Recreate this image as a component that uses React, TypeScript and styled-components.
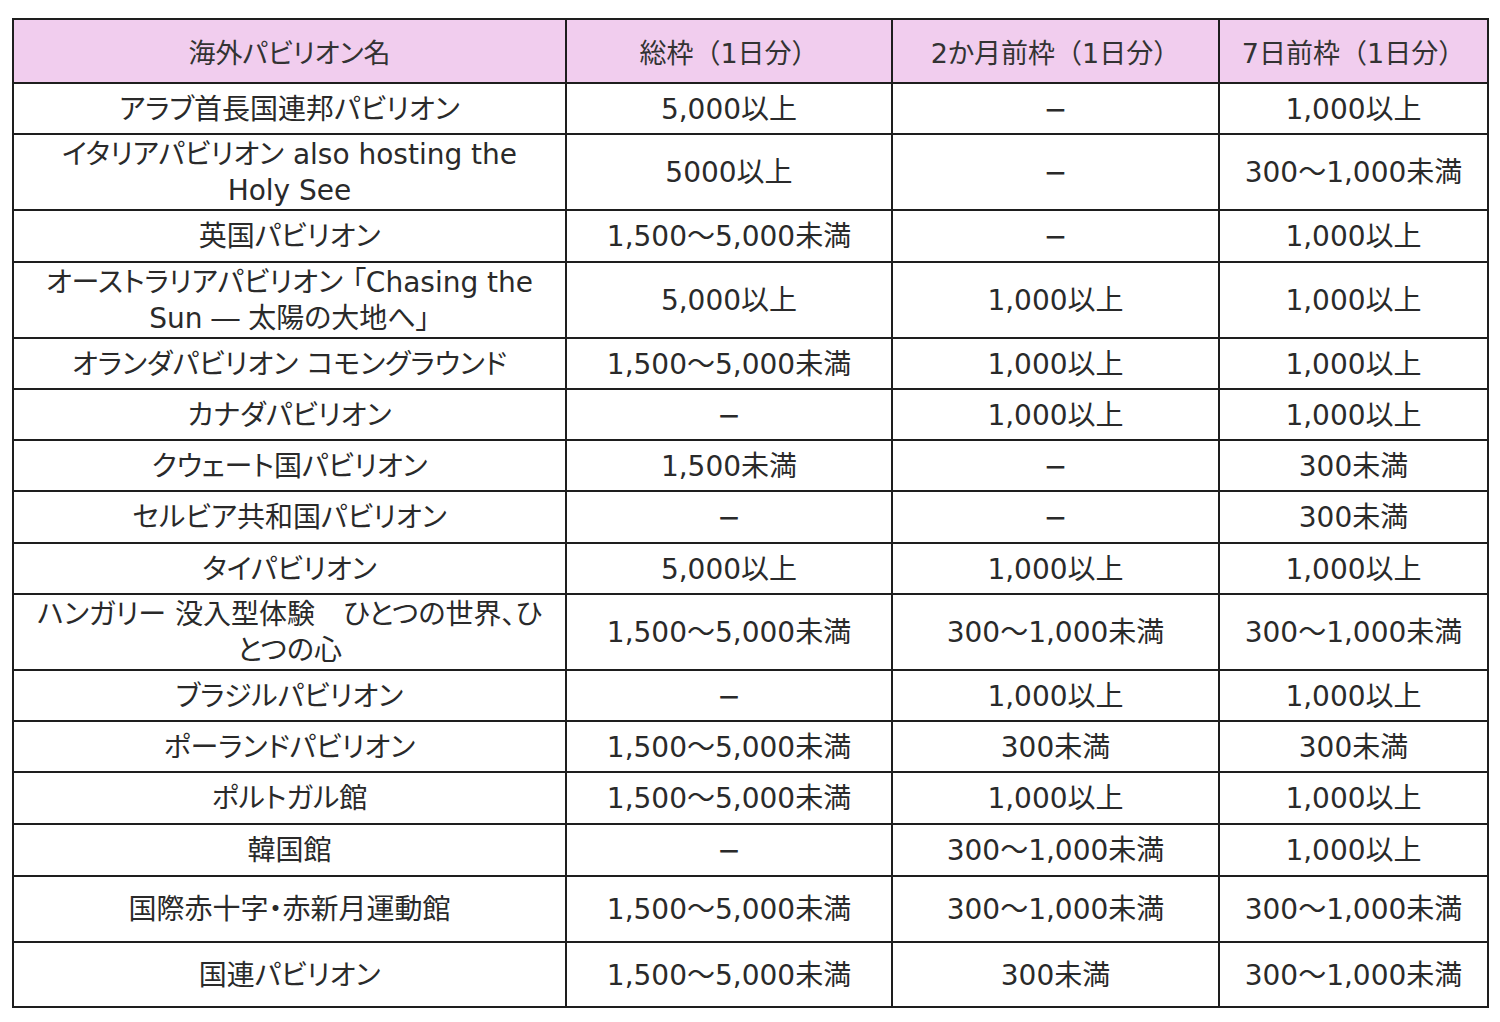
import React from 'react'
import styled, { createGlobalStyle } from 'styled-components'

const GlobalStyle = createGlobalStyle`
  html, body {
    margin: 0;
    padding: 0;
    background: #ffffff;
  }
  body {
    font-family: 'DejaVu Sans', 'Noto Sans CJK JP', sans-serif;
    font-feature-settings: 'palt';
    color: #2a2a2a;
  }
`

const Page = styled.div`
  width: 1500px;
  height: 1022px;
  padding: 18px 0 0 12px;
  box-sizing: border-box;
`

const Table = styled.table`
  width: 1475px;
  border-collapse: collapse;
  table-layout: fixed;
  border: 2.5px solid #1e1e1e;
`

const HeadCell = styled.th`
  background: #f1cdee;
  font-weight: 400;
  font-size: 27px;
  height: 62px;
  padding: 0 4px;
  text-align: center;
  border: 2px solid #1e1e1e;
  color: #333333;
`

const Paren = styled.span`
  font-feature-settings: normal;
`

const Row = styled.tr<{ $h: number }>`
  height: ${({ $h }) => $h}px;
`

const Cell = styled.td`
  border: 2px solid #1e1e1e;
  text-align: center;
  vertical-align: middle;
  font-size: 28px;
  line-height: 36px;
  padding: 2px 4px 0;
  color: #2a2a2a;
  white-space: nowrap;
`

type Item = { name: React.ReactNode; total: string; m2: string; d7: string; h: number }

const DASH = '−'

const rows: Item[] = [
  { name: 'アラブ首長国連邦パビリオン', total: '5,000以上', m2: DASH, d7: '1,000以上', h: 51 },
  { name: <>イタリアパビリオン also hosting the<br />Holy See</>, total: '5000以上', m2: DASH, d7: '300～1,000未満', h: 74 },
  { name: '英国パビリオン', total: '1,500～5,000未満', m2: DASH, d7: '1,000以上', h: 52 },
  { name: <>オーストラリアパビリオン 「Chasing the<br />Sun ― 太陽の大地へ」</>, total: '5,000以上', m2: '1,000以上', d7: '1,000以上', h: 75 },
  { name: 'オランダパビリオン コモングラウンド', total: '1,500～5,000未満', m2: '1,000以上', d7: '1,000以上', h: 51 },
  { name: 'カナダパビリオン', total: DASH, m2: '1,000以上', d7: '1,000以上', h: 51 },
  { name: 'クウェート国パビリオン', total: '1,500未満', m2: DASH, d7: '300未満', h: 51 },
  { name: 'セルビア共和国パビリオン', total: DASH, m2: DASH, d7: '300未満', h: 52 },
  { name: 'タイパビリオン', total: '5,000以上', m2: '1,000以上', d7: '1,000以上', h: 51 },
  { name: <>ハンガリー 没入型体験　ひとつの世界、ひ<br />とつの心</>, total: '1,500～5,000未満', m2: '300～1,000未満', d7: '300～1,000未満', h: 75 },
  { name: 'ブラジルパビリオン', total: DASH, m2: '1,000以上', d7: '1,000以上', h: 51 },
  { name: 'ポーランドパビリオン', total: '1,500～5,000未満', m2: '300未満', d7: '300未満', h: 51 },
  { name: 'ポルトガル館', total: '1,500～5,000未満', m2: '1,000以上', d7: '1,000以上', h: 52 },
  { name: '韓国館', total: DASH, m2: '300～1,000未満', d7: '1,000以上', h: 52 },
  { name: '国際赤十字・赤新月運動館', total: '1,500～5,000未満', m2: '300～1,000未満', d7: '300～1,000未満', h: 66 },
  { name: '国連パビリオン', total: '1,500～5,000未満', m2: '300未満', d7: '300～1,000未満', h: 65 },
]

const Head = ({ label }: { label: string }) => (
  <HeadCell>
    {label}
    <Paren>（</Paren>1日分<Paren>）</Paren>
  </HeadCell>
)

export default function App() {
  return (
    <Page>
      <GlobalStyle />
      <Table>
        <colgroup>
          <col style={{ width: 553 }} />
          <col style={{ width: 326 }} />
          <col style={{ width: 327 }} />
          <col style={{ width: 269 }} />
        </colgroup>
        <thead>
          <tr>
            <HeadCell>海外パビリオン名</HeadCell>
            <Head label="総枠" />
            <Head label="2か月前枠" />
            <Head label="7日前枠" />
          </tr>
        </thead>
        <tbody>
          {rows.map((r, i) => (
            <Row key={i} $h={r.h}>
              <Cell>{r.name}</Cell>
              <Cell>{r.total}</Cell>
              <Cell>{r.m2}</Cell>
              <Cell>{r.d7}</Cell>
            </Row>
          ))}
        </tbody>
      </Table>
    </Page>
  )
}
